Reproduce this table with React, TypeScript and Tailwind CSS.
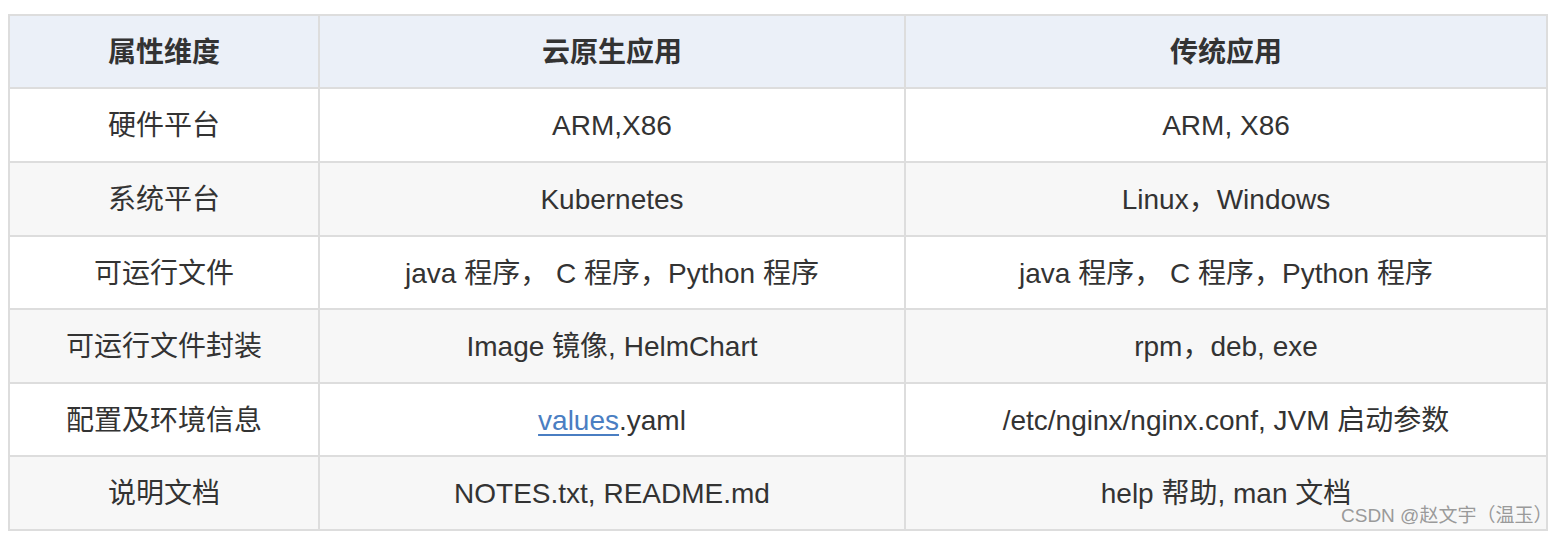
import React from "react";

type Cell = React.ReactNode;

const rows: { cells: Cell[]; bg: string; h: string }[] = [
  { cells: ["硬件平台", "ARM,X86", "ARM, X86"], bg: "bg-white", h: "h-[72px]" },
  { cells: ["系统平台", "Kubernetes", "Linux，Windows"], bg: "bg-[#f7f7f7]", h: "h-[72px]" },
  {
    cells: ["可运行文件", "java 程序， C 程序，Python 程序", "java 程序， C 程序，Python 程序"],
    bg: "bg-white",
    h: "h-[71px]",
  },
  { cells: ["可运行文件封装", "Image 镜像, HelmChart", "rpm，deb, exe"], bg: "bg-[#f7f7f7]", h: "h-[72px]" },
  {
    cells: [
      "配置及环境信息",
      <>
        <span className="text-[#4a7ec2] underline underline-offset-[4px] decoration-[2px]">values</span>.yaml
      </>,
      "/etc/nginx/nginx.conf, JVM 启动参数",
    ],
    bg: "bg-white",
    h: "h-[71px]",
  },
  { cells: ["说明文档", "NOTES.txt, README.md", "help 帮助, man 文档"], bg: "bg-[#f7f7f7]", h: "h-[72px]" },
];

const headers = ["属性维度", "云原生应用", "传统应用"];

export default function App() {
  return (
    <div
      className="relative w-[1556px] h-[542px] bg-white pt-[14px] pl-[8px] text-[#333333]"
      style={{ fontFamily: '"Liberation Sans", "Noto Sans CJK SC", sans-serif' }}
    >
      <div className="w-[1540px] bg-[#dddddd] p-[2px] grid grid-cols-[308px_584px_640px] gap-[2px]">
        {headers.map((h) => (
          <div
            key={h}
            className="h-[71px] pt-[2px] bg-[#ebf0f8] flex items-center justify-center text-[28px] font-bold whitespace-pre"
          >
            {h}
          </div>
        ))}
        {rows.map((r, i) =>
          r.cells.map((c, j) => (
            <div
              key={`${i}-${j}`}
              className={`${r.h} ${r.bg} pt-[2px] flex items-center justify-center text-[28px] whitespace-pre`}
            >
              {c}
            </div>
          ))
        )}
      </div>
      <div className="absolute left-[1341px] top-[505px] text-[19px] leading-[21px] text-[#9a9a9a] whitespace-pre">
        CSDN @赵文宇（温玉）
      </div>
    </div>
  );
}
